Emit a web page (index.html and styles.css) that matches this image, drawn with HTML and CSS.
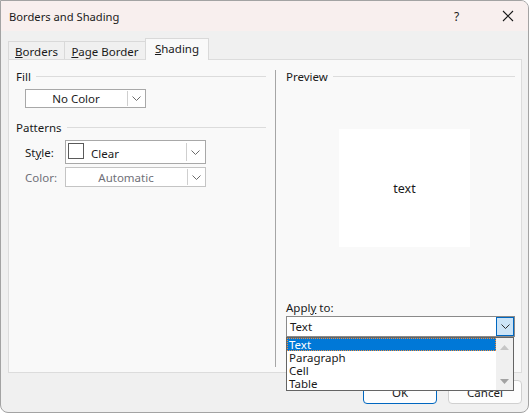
FILE: index.html
```html
<!DOCTYPE html>
<html>
<head>
<meta charset="utf-8">
<link rel="stylesheet" href="styles.css">
</head>
<body>
<div class="window">
  <div class="titlebar">
    <span class="title">Borders and Shading</span>
    <span class="help">?</span>
    <span class="close"><svg width="12" height="12" viewBox="0 0 12 12"><path d="M1 1 L11 11 M11 1 L1 11" stroke="#1a1a1a" stroke-width="1.1" fill="none"/></svg></span>
  </div>
  <div class="client">
    <div class="tabs">
      <div class="tab t1"><span><u>B</u>orders</span></div>
      <div class="tab t2"><span><u>P</u>age Border</span></div>
      <div class="tab t3 active"><span><u>S</u>hading</span></div>
    </div>
    <div class="panel">
      <div class="pane left">
        <div class="header"><span>Fill</span><i class="rule"></i></div>
        <div class="combo nocolor">
          <span class="value center">No Color</span>
          <span class="arrow"><svg width="9" height="5" viewBox="0 0 9 5"><path d="M0.5 0.5 L4.5 4.5 L8.5 0.5" stroke="#6a6a6a" fill="none"/></svg></span>
        </div>
        <div class="header patterns"><span>Patterns</span><i class="rule"></i></div>
        <div class="row style-row">
          <span class="lbl">St<u>y</u>le:</span>
          <div class="combo stylebox">
            <span class="swatch"></span>
            <span class="value clear">Clear</span>
            <span class="arrow"><svg width="9" height="5" viewBox="0 0 9 5"><path d="M0.5 0.5 L4.5 4.5 L8.5 0.5" stroke="#6a6a6a" fill="none"/></svg></span>
          </div>
        </div>
        <div class="row color-row">
          <span class="lbl dim">Color:</span>
          <div class="combo colorbox">
            <span class="value center dimtext">Automatic</span>
            <span class="arrow"><svg width="9" height="5" viewBox="0 0 9 5"><path d="M0.5 0.5 L4.5 4.5 L8.5 0.5" stroke="#6a6a6a" fill="none"/></svg></span>
          </div>
        </div>
      </div>
      <div class="divider"></div>
      <div class="pane right">
        <div class="header"><span>Preview</span><i class="rule"></i></div>
        <div class="preview">text</div>
        <div class="applylbl"><span>Appl<u>y</u> to:</span></div>
        <div class="applywrap">
          <div class="combo apply">
            <span class="value">Text</span>
            <span class="arrow hot"><svg width="9" height="5" viewBox="0 0 9 5"><path d="M0.5 0.5 L4.5 4.5 L8.5 0.5" stroke="#303030" fill="none"/></svg></span>
          </div>
          <div class="list">
            <div class="items">
              <div class="item sel">Text</div>
              <div class="item">Paragraph</div>
              <div class="item">Cell</div>
              <div class="item">Table</div>
            </div>
            <div class="scroll">
              <svg width="9" height="5" viewBox="0 0 9 5"><path d="M0 5 L4.5 0 L9 5 Z" fill="#c6c6c6"/></svg>
              <svg width="9" height="5" viewBox="0 0 9 5"><path d="M0 0 L4.5 5 L9 0 Z" fill="#a3a3a3"/></svg>
            </div>
          </div>
        </div>
      </div>
    </div>
    <div class="buttons">
      <div class="btn ok">OK</div>
      <div class="btn cancel">Cancel</div>
    </div>
  </div>
</div>
</body>
</html>
```
FILE: styles.css
```css
* { box-sizing: border-box; }
html, body { margin: 0; padding: 0; }
body {
  background: #ffffff;
  font-family: "Noto Sans", "Open Sans", sans-serif;
  font-size: 11.5px;
  color: #1a1a1a;
}
.window {
  width: 529px;
  height: 413px;
  border: 1px solid #a3a3a3;
  border-radius: 0 8px 8px 8px;
  overflow: hidden;
  background: #f0f0f0;
}
.titlebar {
  height: 30px;
  background: #f8efee;
  display: flex;
  align-items: center;
  padding-left: 8px;
}
.title { flex: 1; font-size: 11.2px; }
.help { width: 12px; margin-right: 36px; font-size: 12px; }
.close { width: 12px; margin-right: 14px; display: flex; }
.client { padding: 7px 0 0 7px; }
.tabs { display: flex; align-items: flex-end; height: 21px; }
.tab {
  height: 18px;
  border: 1px solid #d9d9d9;
  border-bottom: none;
  background: #f0f0f0;
  display: flex;
  align-items: center;
  justify-content: center;
  margin-right: -1px;
  padding-top: 1px;
}
.t1 { width: 57px; }
.t2 { width: 82px; }
.t3 { width: 64px; }
.tab.active {
  height: 22px;
  background: #f9f9f9;
  margin-bottom: -1px;
  position: relative;
  z-index: 1;
  padding-top: 0;
  padding-bottom: 3px;
}
.panel {
  width: 514px;
  height: 314px;
  border: 1px solid #dcdcdc;
  background: #f9f9f9;
  display: grid;
  grid-template-columns: 266px 1px 1fr;
}
.pane.left { padding: 9px 9px 0 7px; }
.pane.right { padding: 9px 6px 0 10px; }
.divider { background: #a6a6a6; margin: 10px 0 5px 0; }
.header { display: flex; align-items: center; height: 14px; }
.rule { flex: 1; border-top: 1px solid #dcdcdc; margin-left: 5px; height: 0; }
.combo {
  display: flex;
  align-items: stretch;
  background: #ffffff;
  border: 1px solid #a8a8a8;
}
.combo .value { flex: 1; display: flex; align-items: center; }
.combo .value.center { justify-content: center; }
.combo .arrow {
  width: 17px;
  margin: 1px;
  border-left: 1px solid #cfcfcf;
  display: flex;
  align-items: center;
  justify-content: center;
}
.nocolor { width: 121px; height: 19px; margin: 6px 0 0 9px; }
.patterns { margin-top: 12px; }
.row { display: flex; align-items: center; margin-left: 9px; }
.lbl { width: 40px; }
.dim, .dimtext { color: #6f6f78; }
.style-row { margin-top: 6px; }
.stylebox { width: 141px; height: 24px; }
.swatch {
  width: 16px; height: 16px;
  border: 1px solid #5a5a5a;
  margin: 2px 0 0 2px;
  background: #fff;
}
.value.clear { padding: 3px 0 0 7px; }
.stylebox .arrow { margin: 2px; }
.color-row { margin-top: 3px; }
.colorbox { width: 141px; height: 20px; border-color: #c4c4c4; }
.preview {
  width: 131px; height: 118px;
  margin: 46px 0 0 53px;
  background: #ffffff;
  display: flex; align-items: center; justify-content: center;
  font-size: 12.5px;
}
.applylbl { margin-top: 53px; height: 14px; display: flex; align-items: center; }
.applywrap { position: relative; margin-top: 2px; }
.apply { height: 21px; border-color: #8a8a8a; }
.apply .value { padding-left: 3px; }
.apply .arrow.hot {
  margin: 0;
  width: 18px;
  border: 1px solid #0067c0;
  background: #cce4f7;
}
.list {
  position: absolute;
  left: 0; top: 21px;
  width: 228px; height: 54px;
  border: 1px solid #646464;
  background: #ffffff;
  display: flex;
  z-index: 5;
}
.items { flex: 1; }
.item { height: 13px; line-height: 13px; padding-left: 2px; }
.item.sel {
  background: #0078d7;
  color: #ffffff;
  outline: 1px dotted #f08c3a;
  outline-offset: -1px;
}
.scroll {
  width: 17px;
  background: #f0f0f0;
  display: flex;
  flex-direction: column;
  align-items: center;
  justify-content: space-between;
  padding: 7px 0 6px 0;
}
.buttons { display: flex; justify-content: flex-end; gap: 11px; margin-top: 7px; padding-right: 6px; }
.btn {
  width: 74px; height: 24px;
  border: 1px solid #d0d0d0;
  border-radius: 4px;
  background: #fdfdfd;
  display: flex; align-items: center; justify-content: center;
}
.btn.ok { border-color: #0067c0; }
```
